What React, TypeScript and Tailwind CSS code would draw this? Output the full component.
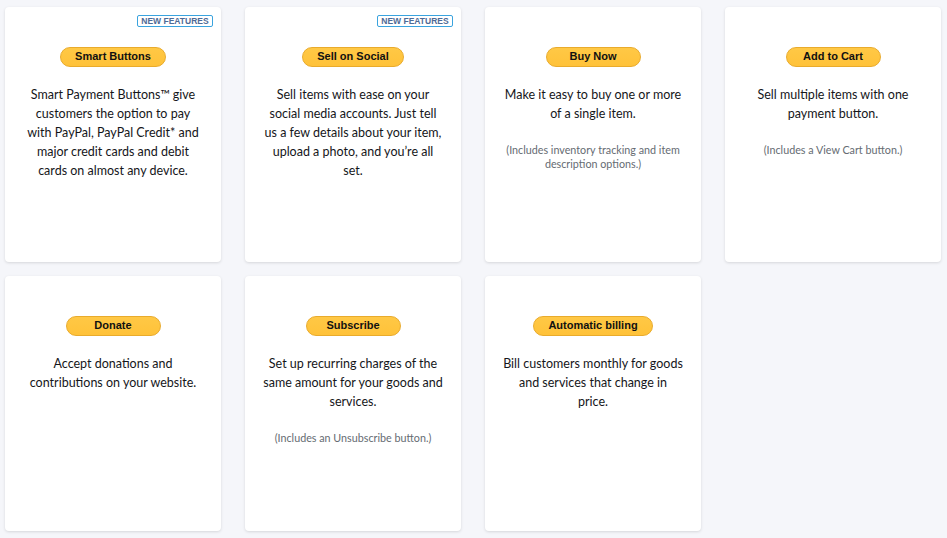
import React from "react";

type Card = {
  title: string;
  lines: string[];
  note?: string[];
  isNew?: boolean;
};

const cards: Card[] = [
  {
    title: "Smart Buttons",
    isNew: true,
    lines: [
      "Smart Payment Buttons™ give",
      "customers the option to pay",
      "with PayPal, PayPal Credit* and",
      "major credit cards and debit",
      "cards on almost any device.",
    ],
  },
  {
    title: "Sell on Social",
    isNew: true,
    lines: [
      "Sell items with ease on your",
      "social media accounts. Just tell",
      "us a few details about your item,",
      "upload a photo, and you’re all",
      "set.",
    ],
  },
  {
    title: "Buy Now",
    lines: ["Make it easy to buy one or more", "of a single item."],
    note: ["(Includes inventory tracking and item", "description options.)"],
  },
  {
    title: "Add to Cart",
    lines: ["Sell multiple items with one", "payment button."],
    note: ["(Includes a View Cart button.)"],
  },
  {
    title: "Donate",
    lines: ["Accept donations and", "contributions on your website."],
  },
  {
    title: "Subscribe",
    lines: [
      "Set up recurring charges of the",
      "same amount for your goods and",
      "services.",
    ],
    note: ["(Includes an Unsubscribe button.)"],
  },
  {
    title: "Automatic billing",
    lines: [
      "Bill customers monthly for goods",
      "and services that change in",
      "price.",
    ],
  },
];

function withBreaks(lines: string[]) {
  return lines.map((l, i) => (
    <React.Fragment key={i}>
      {l}
      {i < lines.length - 1 && <br />}
    </React.Fragment>
  ));
}

export default function App() {
  return (
    <div className="min-h-screen w-full bg-[#f5f6fa] pt-[7px] pl-[5px]">
      <div className="grid grid-cols-[repeat(4,216px)] gap-x-6 gap-y-[14px]">
        {cards.map((c) => (
          <div
            key={c.title}
            className="relative flex h-[255px] flex-col items-center rounded-[4px] bg-white px-2 pt-10 text-center shadow-[0_1px_3px_rgba(0,0,0,0.13)]"
          >
            {c.isNew && (
              <span className="absolute right-2 top-2 flex h-3 w-[76px] items-center justify-center rounded-[2px] border border-[#3aa3de] font-['Liberation_Sans',Arial,sans-serif] text-[8.5px] font-bold leading-none text-[#4e6a96]">
                NEW FEATURES
              </span>
            )}
            <div className="flex h-5 min-w-[95px] items-center justify-center rounded-full border border-[#e9ab2c] bg-gradient-to-b from-[#ffc845] to-[#ffc239] px-[14px] pb-px font-['Liberation_Sans',Arial,sans-serif] text-[11px] font-bold leading-none text-[#111]">
              {c.title}
            </div>
            <p className="mt-[18px] whitespace-nowrap font-['Lato','Open_Sans',sans-serif] text-[12.5px] leading-[19px] text-[#15161a]">
              {withBreaks(c.lines)}
            </p>
            {c.note && (
              <p className="mt-5 whitespace-nowrap font-['Lato','Open_Sans',sans-serif] text-[10.75px] leading-[14px] text-[#656b72]">
                {withBreaks(c.note)}
              </p>
            )}
          </div>
        ))}
      </div>
    </div>
  );
}
